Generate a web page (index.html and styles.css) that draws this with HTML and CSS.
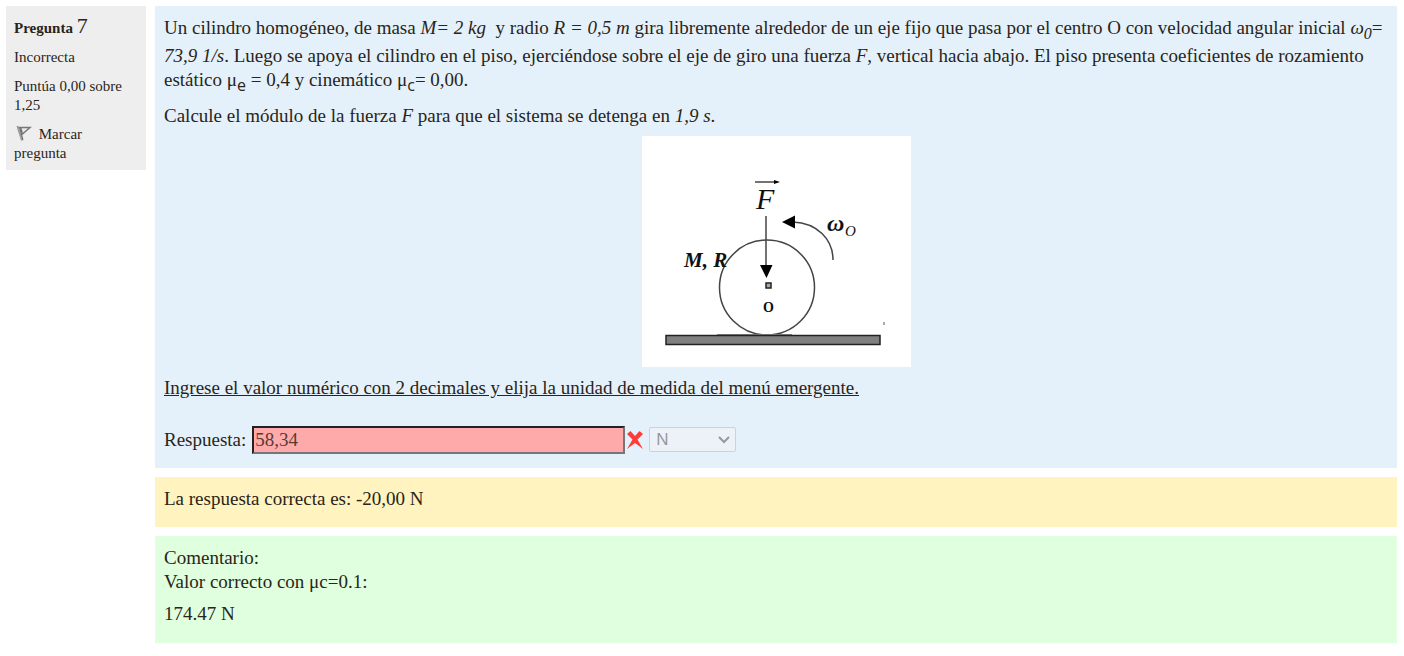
FILE: index.html
```html
<!DOCTYPE html>
<html lang="es">
<head>
<meta charset="utf-8">
<meta name="viewport" content="width=device-width, initial-scale=1">
<title>Pregunta 7</title>
<link rel="stylesheet" href="styles.css">
</head>
<body>
<main class="question">
  <aside class="info">
    <h3 class="info-title">Pregunta <span class="info-number">7</span></h3>
    <div class="info-state">Incorrecta</div>
    <div class="info-grade">Puntúa 0,00 sobre 1,25</div>
    <div class="info-flag">
      <svg class="flag-icon" viewBox="0 0 16 16" aria-hidden="true">
        <path d="M1.500 1 6 15.500" stroke="#999" stroke-width="2" fill="none"/>
        <path d="M4.500 2.500 14 2.500 6.500 9z" fill="#e8e8e8" stroke="#777" stroke-width="1.500"/>
        <path d="M3.500 2 7 15" stroke="#666" stroke-width="1" fill="none"/>
      </svg>
      Marcar pregunta
    </div>
  </aside>
  <div class="content">
    <section class="formulation">
      <p class="statement">Un cilindro homogéneo, de masa <em>M= 2 kg</em>&nbsp; y radio <em>R = 0,5 m</em> gira libremente alrededor de un eje fijo que pasa por el centro O con velocidad angular inicial <em>ω<sub>0</sub></em>= <br><em>73,9 1/s</em>. Luego se apoya el cilindro en el piso, ejerciéndose sobre el eje de giro una fuerza <em>F</em>, vertical hacia abajo. El piso presenta coeficientes de rozamiento <br>estático μ<sub class="sub-sans">e</sub> = 0,4 y cinemático μ<sub class="sub-sans">c</sub>= 0,00.</p>
      <p class="task">Calcule el módulo de la fuerza <em>F</em> para que el sistema se detenga en <em>1,9 s</em>.</p>
      <svg class="figure" viewBox="0 0 269 231" role="img" aria-label="Cilindro de masa M y radio R apoyado en el piso">
        <rect width="269" height="231" fill="#fff"/>
        <g fill="none" stroke="#444" stroke-width="1.500">
          <path d="M113 46H134"/>
          <path d="M124 80V132"/>
          <circle cx="125" cy="151.500" r="47.500"/>
          <path d="M151 86C175 87 191 103 191 124"/>
        </g>
        <path d="M132 44 138 46 132 48zM118 129H130.500L124.500 142zM140 86 153 79.500V92.500z" fill="#000"/>
        <rect x="124" y="147" width="5" height="5" fill="#aaa" stroke="#222" stroke-width="1.500"/>
        <path d="M75 198.500H150" stroke="#888"/>
        <rect x="24" y="199.500" width="214" height="9" fill="#808080" stroke="#222" stroke-width="1.500"/>
        <path d="M242 186v3" stroke="#555"/>
        <g class="figure-text">
          <text x="114" y="73" font-size="30" font-style="italic">F</text>
          <text x="42" y="131" font-size="21" font-style="italic" font-weight="bold">M, R</text>
          <text x="185" y="95" font-size="24" font-style="italic" font-weight="bold">ω</text>
          <text x="203" y="100" font-size="15" font-style="italic">O</text>
          <text x="121" y="176" font-size="14" font-weight="bold">O</text>
        </g>
      </svg>
      <p class="instruction">Ingrese el valor numérico con 2 decimales y elija la unidad de medida del menú emergente.</p>
      <div class="answer">
        <label class="answer-label" for="answer">Respuesta:</label>
        <input class="answer-input" id="answer" type="text" value="58,34" readonly>
        <svg class="wrong-icon" viewBox="0 0 16 18" role="img" aria-label="Incorrecta">
          <path d="M0 3 3.500 0 8 5 12.500 0 16 3 10.500 8.500 16 18 8 12 0 18 5.500 8.500z" fill="#ff3c38"/>
        </svg>
        <span class="unit">
          <select class="unit-select" aria-label="Unidad" disabled><option>N</option></select>
          <svg class="unit-arrow" viewBox="0 0 12 8" aria-hidden="true"><path d="M1 1 6 6 11 1" fill="none" stroke="#96999c" stroke-width="2"/></svg>
        </span>
      </div>
    </section>
    <section class="outcome">La respuesta correcta es: -20,00 N</section>
    <section class="comment">
      <div>Comentario:</div>
      <p class="comment-line">Valor correcto con μc=0.1:</p>
      <p class="comment-line">174.47 N</p>
    </section>
  </div>
</main>
</body>
</html>
```
FILE: styles.css
```css
* { box-sizing: border-box; }

body {
  margin: 0;
  background: #fff;
  color: #2a2419;
  font-family: "Palatino Linotype", "Book Antiqua", "Liberation Serif", serif;
  font-size: 19px;
  line-height: 24px;
}

p { margin: 0; }

.question {
  display: flex;
  align-items: flex-start;
  gap: 9px;
  padding: 6px 7px 6px 6px;
}

.info {
  flex: 0 0 140px;
  display: flex;
  flex-direction: column;
  gap: 10px;
  padding: 13px 8px 7px;
  background: #eee;
  font-size: 15px;
  line-height: 19px;
}

.info-title {
  margin: 0;
  font-size: 15px;
  line-height: 19px;
}

.info-number {
  font-size: 22px;
  font-weight: normal;
  line-height: 1px;
}

.flag-icon {
  width: 16px;
  height: 16px;
  margin: 0 3px 0 2px;
  vertical-align: -2px;
}

.content {
  flex: 1;
  min-width: 0;
  display: flex;
  flex-direction: column;
  gap: 9px;
}

.formulation,
.outcome,
.comment {
  padding: 10px 9px 16px;
}

.formulation {
  padding-bottom: 14px;
  background: #e4f1fa;
}

sub {
  font-size: 16px;
  line-height: 20px;
}

.sub-sans {
  font-family: "Open Sans", sans-serif;
  line-height: 1px;
}

.task { margin-top: 12px; }

.figure {
  display: block;
  width: 269px;
  height: 231px;
  margin: 8px auto 9px;
}

.figure-text {
  font-family: "Liberation Serif", serif;
  fill: #111;
}

.instruction { text-decoration: underline; }

.answer {
  display: flex;
  align-items: center;
  margin-top: 26px;
}

.answer-label { margin-right: 6px; }

.answer-input {
  width: 373px;
  height: 28px;
  padding: 1px;
  border: 2px solid;
  border-color: #222 #767676 #767676 #222;
  background: #ffaaaa;
  color: #5a3a34;
  font: inherit;
}

.wrong-icon {
  width: 16px;
  height: 18px;
  margin: 0 6px 0 2px;
}

.unit {
  display: grid;
  align-items: center;
}

.unit-select,
.unit-arrow { grid-area: 1 / 1; }

.unit-select {
  appearance: none;
  width: 87px;
  height: 25px;
  padding: 0 6px;
  border: 1px solid #ccd3d8;
  border-radius: 2px;
  background: #edf2f9;
  color: #96999c;
  font: 17px "Liberation Sans", sans-serif;
  opacity: 1;
}

.unit-arrow {
  justify-self: end;
  width: 12px;
  height: 8px;
  margin-right: 6px;
  pointer-events: none;
}

.outcome { background: #fff3bf; }

.comment {
  padding-bottom: 17px;
  background: #dfffdf;
}

.comment-line + .comment-line { margin-top: 8px; }
```
